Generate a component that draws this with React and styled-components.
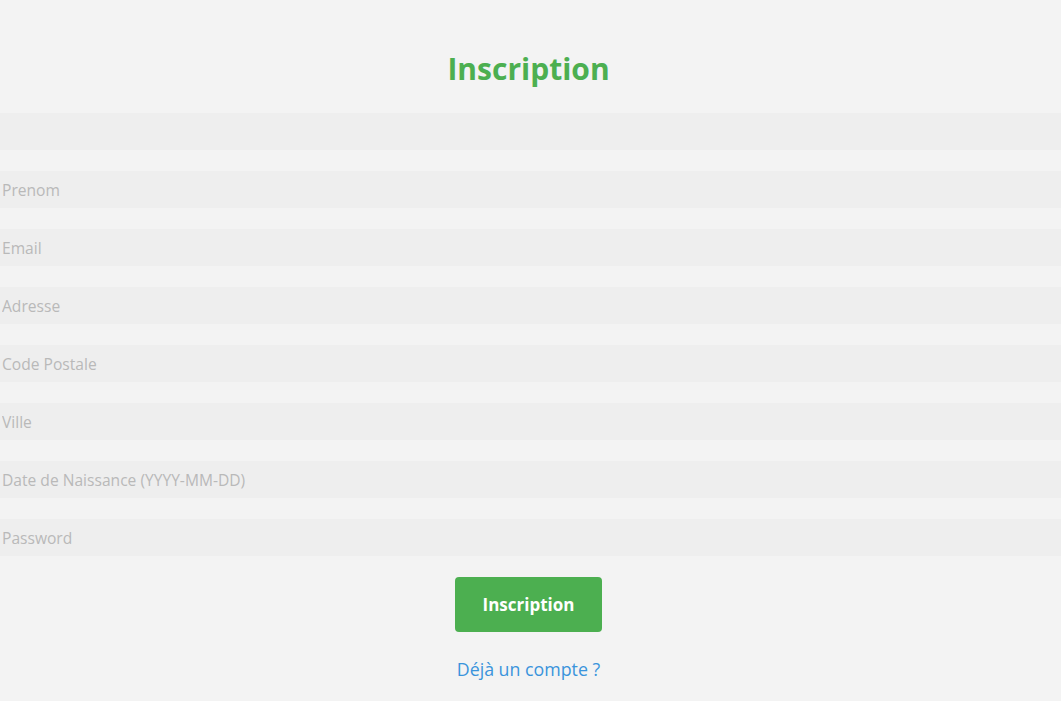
import React from 'react';
import styled, { createGlobalStyle } from 'styled-components';

const GlobalStyle = createGlobalStyle`
    html, body {
        margin: 0;
        background: #f3f3f3;
        font-family: "Open Sans", "Liberation Sans", sans-serif;
    }
`;

const fields = [
    '',
    'Prenom',
    'Email',
    'Adresse',
    'Code Postale',
    'Ville',
    'Date de Naissance (YYYY-MM-DD)',
    'Password'
];

const App = () => {
    return (<>
        <GlobalStyle />
        <Page>
            <Title>Inscription</Title>
            <Form onSubmit={(e) => e.preventDefault()}>
                {fields.map((field, i) => (
                    <Input
                        key={i}
                        type={field === 'Password' ? 'password' : 'text'}
                        placeholder={field}
                    />
                ))}
                <Button type='submit'>Inscription</Button>
            </Form>
            <Link href='#'>Déjà un compte ?</Link>
        </Page>
    </>);
}

export default App;

const Page = styled.div`
    display: flex;
    flex-direction: column;
    align-items: center;
    padding-top: 48px;
`

const Title = styled.h1`
    margin: 0 4px 23px 0;
    height: 42px;
    line-height: 42px;
    font-size: 30px;
    font-weight: 700;
    color: #4caf50;
`

const Form = styled.form`
    width: 100%;
    display: flex;
    flex-direction: column;
    align-items: center;
    gap: 21px;
`

const Input = styled.input`
    box-sizing: border-box;
    width: 100%;
    height: 37px;
    border: none;
    outline: none;
    padding: 0 2px;
    background: #eeeeee;
    font-family: "Open Sans", "Liberation Sans", sans-serif;
    font-size: 15.6px;
    color: #333;

    &::placeholder {
        color: #b9b9b9;
    }
`

const Button = styled.button`
    width: 147px;
    height: 55px;
    margin-right: 4px;
    border: none;
    border-radius: 4px;
    background: #4caf50;
    color: #ffffff;
    font-family: "Open Sans", "Liberation Sans", sans-serif;
    font-size: 17px;
    font-weight: 700;
    cursor: pointer;
`

const Link = styled.a`
    margin: 25px 4px 0 0;
    font-size: 17.8px;
    color: #3a94dc;
    text-decoration: none;
`
